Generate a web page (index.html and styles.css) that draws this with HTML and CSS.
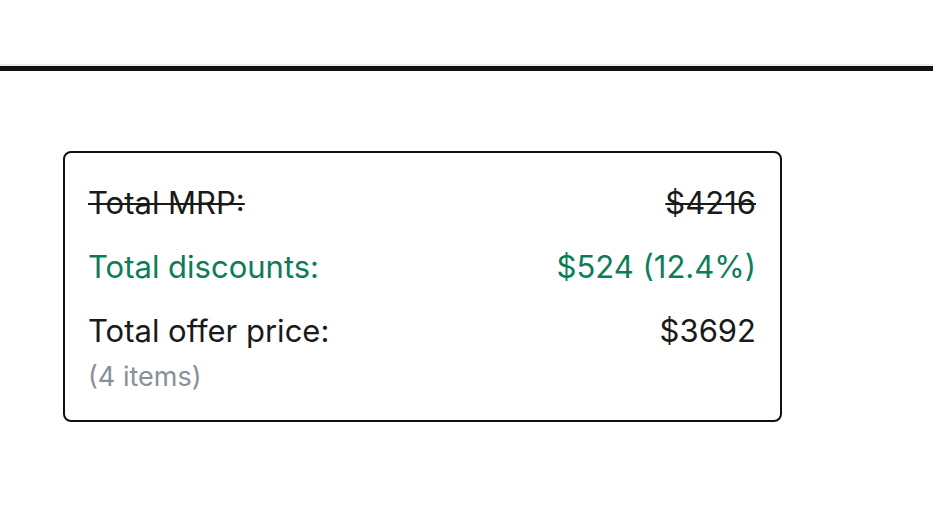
FILE: index.html
```html
<!DOCTYPE html>
<html>
<head>
<meta charset="utf-8">
<link rel="stylesheet" href="styles.css">
</head>
<body>
<header class="topbar"></header>
<main class="page">
  <section class="summary">
    <div class="row strike">
      <span>Total MRP:</span>
      <span>$4216</span>
    </div>
    <div class="row discount">
      <span>Total discounts:</span>
      <span>$524 (12.4%)</span>
    </div>
    <div class="row total">
      <div class="label">
        <span>Total offer price:</span>
        <span class="count">(4 items)</span>
      </div>
      <span>$3692</span>
    </div>
  </section>
</main>
</body>
</html>
```
FILE: styles.css
```css
html, body {
  margin: 0;
  padding: 0;
  background: #fff;
}
body {
  font-family: Inter, "Liberation Sans", sans-serif;
  color: #1a1a1a;
}
.topbar {
  height: 66px;
  border-bottom: 5px solid #111;
  box-shadow: 0 -2px 0 #ececec inset;
}
.page {
  padding: 80px 0 0 63px;
}
.summary {
  box-sizing: border-box;
  width: 719px;
  border: 2px solid #111;
  border-radius: 8px;
  padding: 32px 24px 15px 23px;
  display: flex;
  flex-direction: column;
  gap: 28px;
  font-size: 31px;
  line-height: 36px;
}
.row {
  display: flex;
  justify-content: space-between;
  align-items: flex-start;
}
.strike span {
  text-decoration: line-through;
  text-decoration-thickness: 2px;
}
.discount {
  color: #0b7d59;
}
.label {
  display: flex;
  flex-direction: column;
}
.count {
  color: #8a9099;
  font-size: 27px;
  line-height: 56px;
}
```
